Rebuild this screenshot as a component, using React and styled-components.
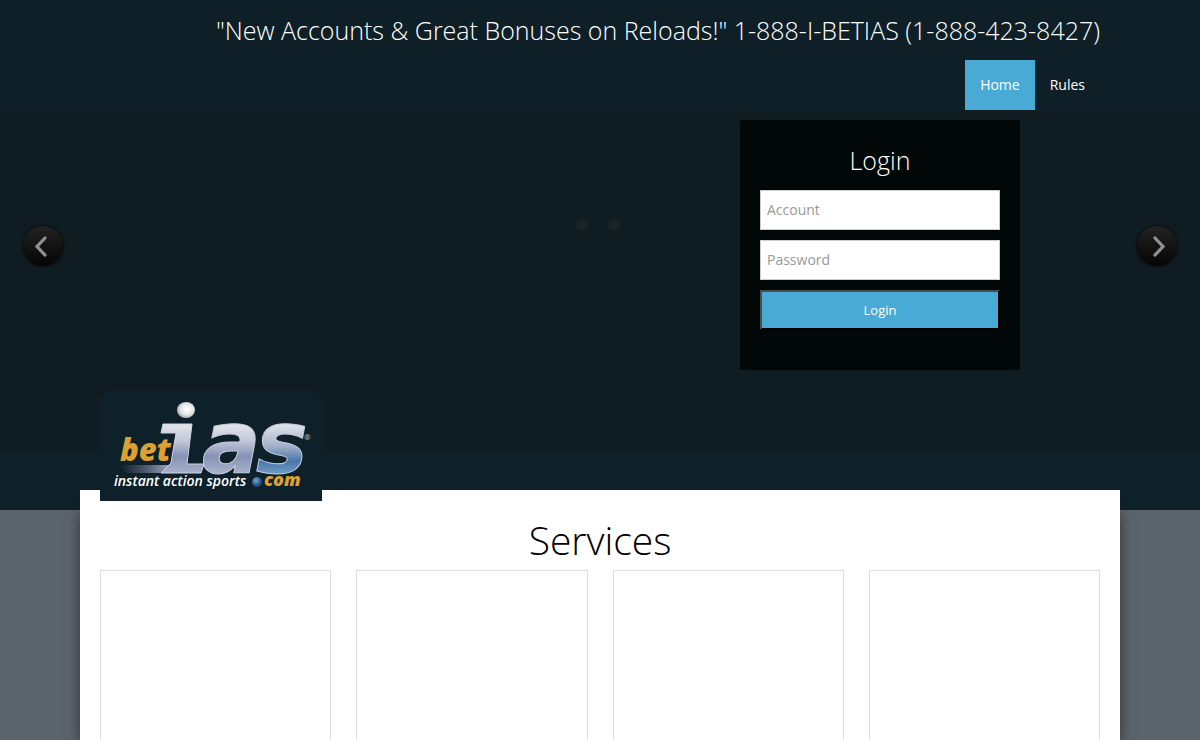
import React from 'react';
import styled, { createGlobalStyle } from 'styled-components';

const Global = createGlobalStyle`
  * { box-sizing: border-box; }
  body {
    margin: 0;
    background: #5b646b;
    color: #000;
    font: 400 14px/20px 'Open Sans', 'Noto Sans', sans-serif;
  }
  h1, h2, p, ul { margin: 0; padding: 0; }
`;

const Page = styled.div`
  min-height: 100vh;
  display: flex;
  flex-direction: column;
  overflow: hidden;
`;

const Wrap = styled.div`
  width: 100%;
  max-width: 1040px;
  margin: 0 auto;
  padding: 0 20px;
`;

const Header = styled.header`
  background: #0e1f28;
  color: #fff;
`;

const Promo = styled.p`
  font-size: 25px;
  font-weight: 300;
  line-height: 60px;
  text-align: right;
`;

const Nav = styled.nav`
  display: flex;
  justify-content: flex-end;
`;

const NavLink = styled.a`
  padding: 0 15px;
  line-height: 50px;
  color: #fff;
  text-decoration: none;
  background: ${(p) => (p.$active ? '#4aaad6' : 'transparent')};
`;

const Hero = styled.section`
  position: relative;
  height: 340px;
  padding-top: 10px;
  background: #0f1d23;
`;

const HeroInner = styled(Wrap)`
  display: flex;
  justify-content: flex-end;
  padding-right: 100px;
`;

const LoginForm = styled.form`
  display: flex;
  flex-direction: column;
  gap: 10px;
  width: 280px;
  height: 250px;
  padding: 20px;
  background: #020808;
`;

const LoginTitle = styled.h2`
  color: #fff;
  font-size: 25px;
  font-weight: 300;
  line-height: 40px;
  text-align: center;
`;

const Field = styled.input`
  width: 100%;
  height: 40px;
  padding: 0 6px 2px;
  border: 1px solid #ccc;
  background: #fff;
  color: #333;
  font: inherit;
  &::placeholder { color: #999; opacity: 1; }
`;

const Submit = styled.button`
  height: 40px;
  border: 2px solid;
  border-color: #4c4c4c #000 #000 #4c4c4c;
  background: #4aaad6;
  color: #fff;
  font: inherit;
  font-size: 13px;
`;

const Arrow = styled.button`
  position: absolute;
  top: 116px;
  ${(p) => p.$side}: 23px;
  width: 40px;
  height: 40px;
  padding: 0;
  border: 0;
  border-radius: 50%;
  background: linear-gradient(#222, #050505);
  box-shadow: 0 0 2px 1px #080c0e;
  svg { display: block; }
`;

const Dots = styled.div`
  position: absolute;
  top: 109px;
  left: 0;
  right: 0;
  display: flex;
  justify-content: center;
  gap: 20px;
  padding-right: 4px;
`;

const Dot = styled.span`
  width: 12px;
  height: 12px;
  border-radius: 50%;
  background: #1d2222;
`;

const Band = styled.div`
  height: 60px;
  background: #0e212b;
`;

const Content = styled.main`
  position: relative;
  display: flex;
  flex-direction: column;
  flex: 1;
  width: 100%;
  max-width: 1040px;
  min-height: 250px;
  margin: -20px auto 0;
  padding: 20px 20px 0;
  background: #fff;
`;

const Shade = styled.div`
  position: absolute;
  inset: 20px 0 0;
  z-index: -1;
  box-shadow: 0 4px 12px rgba(0, 0, 0, 0.5);
`;

const Backdrop = styled.div`
  position: relative;
  z-index: 0;
  display: flex;
  flex: 1;
`;

const LogoLink = styled.a`
  position: absolute;
  left: 20px;
  bottom: calc(100% - 11px);
  width: 222px;
  height: 110px;
  border-radius: 10px 10px 0 0;
  background: #0e202a;
  svg { display: block; }
`;

const Heading = styled.h1`
  font-size: 39px;
  font-weight: 300;
  line-height: 60px;
  text-align: center;
`;

const Cards = styled.div`
  display: grid;
  grid-template-columns: repeat(4, 1fr);
  gap: 25px;
  flex: 1;
`;

const Card = styled.article`
  min-height: 170px;
  border: 1px solid #ddd;
  border-bottom: 0;
`;

const BigLetter = styled.text`
  font: italic 700 87px 'DejaVu Sans', sans-serif;
  stroke: #c3cadb;
  stroke-width: 1px;
`;

const Word = styled.text`
  font: italic ${(p) => p.$weight} ${(p) => p.$size}px 'Open Sans', sans-serif;
  fill: ${(p) => p.$color};
`;

const Mark = styled.text`
  font: 400 8px 'Open Sans', sans-serif;
  fill: #c5c9cf;
`;

function Chevron({ d }) {
  return (
    <svg width="40" height="40" viewBox="0 0 40 40" fill="none" stroke="#8f9193" strokeWidth="3.2" strokeLinecap="round" aria-hidden="true">
      <path d={d} />
    </svg>
  );
}

function Logo() {
  return (
    <svg width="222" height="110" viewBox="0 0 222 110" role="img" aria-label="betias, instant action sports.com">
      <defs>
        <linearGradient id="metal" gradientUnits="userSpaceOnUse" x1="0" y1="32" x2="0" y2="83">
          <stop offset="0" stopColor="#e6e8ee" />
          <stop offset=".35" stopColor="#c3c7d8" />
          <stop offset=".65" stopColor="#8692b5" />
          <stop offset="1" stopColor="#a9b3cb" />
        </linearGradient>
        <linearGradient id="steel" gradientUnits="userSpaceOnUse" x1="0" y1="32" x2="0" y2="83">
          <stop offset="0" stopColor="#e3e6ed" />
          <stop offset=".45" stopColor="#a4b0ca" />
          <stop offset=".75" stopColor="#4977ab" />
          <stop offset="1" stopColor="#6f9bc6" />
        </linearGradient>
        <linearGradient id="sweep">
          <stop offset="0" stopColor="#7d88a6" stopOpacity="0" />
          <stop offset="1" stopColor="#a3abc5" />
        </linearGradient>
        <radialGradient id="ball" cx=".55" cy=".45">
          <stop offset="0" stopColor="#fff" />
          <stop offset=".7" stopColor="#e6e6e4" />
          <stop offset="1" stopColor="#b9bcc0" />
        </radialGradient>
        <radialGradient id="dot" cx=".4" cy=".35">
          <stop offset="0" stopColor="#79a8d0" />
          <stop offset="1" stopColor="#244f80" />
        </radialGradient>
      </defs>
      <path d="M20 74H72L68 82H26Z" fill="url(#sweep)" />
      <path d="M63 33H92L87 73H104L101 82H61L71 72L76 42H61Z" fill="url(#metal)" stroke="#d0d4e0" strokeWidth="1" />
      <ellipse cx="86" cy="19" rx="9" ry="8" fill="url(#ball)" />
      <BigLetter x="102" y="82" fill="url(#metal)">a</BigLetter>
      <BigLetter x="156" y="82" fill="url(#steel)">s</BigLetter>
      <Word x="20" y="70" $color="#dda032" $weight={800} $size={31}>bet</Word>
      <Word x="14" y="95" $color="#fff" $weight={600} $size={14}>instant action sports</Word>
      <circle cx="157" cy="91" r="5" fill="url(#dot)" />
      <Word x="164" y="95" $color="#dda032" $weight={800} $size={18}>com</Word>
      <Mark x="204" y="49">®</Mark>
    </svg>
  );
}

export default function App() {
  return (
    <Page>
      <Global />
      <Header>
        <Wrap>
          <Promo>"New Accounts &amp; Great Bonuses on Reloads!" 1-888-I-BETIAS (1-888-423-8427)</Promo>
          <Nav>
            <NavLink href="#home" $active>Home</NavLink>
            <NavLink href="#rules">Rules</NavLink>
          </Nav>
        </Wrap>
      </Header>
      <Hero>
        <Dots><Dot /><Dot /></Dots>
        <HeroInner>
          <LoginForm onSubmit={(e) => e.preventDefault()}>
            <LoginTitle>Login</LoginTitle>
            <Field type="text" placeholder="Account" aria-label="Account" />
            <Field type="password" placeholder="Password" aria-label="Password" />
            <Submit type="submit">Login</Submit>
          </LoginForm>
        </HeroInner>
        <Arrow type="button" $side="left" aria-label="Previous slide"><Chevron d="M22 12L14 20.500L22 29" /></Arrow>
        <Arrow type="button" $side="right" aria-label="Next slide"><Chevron d="M18 12L26 20.500L18 29" /></Arrow>
      </Hero>
      <Band />
      <Backdrop>
        <Content>
          <Shade />
          <LogoLink href="#home"><Logo /></LogoLink>
          <Heading>Services</Heading>
          <Cards>
            <Card /><Card /><Card /><Card />
          </Cards>
        </Content>
      </Backdrop>
    </Page>
  );
}
